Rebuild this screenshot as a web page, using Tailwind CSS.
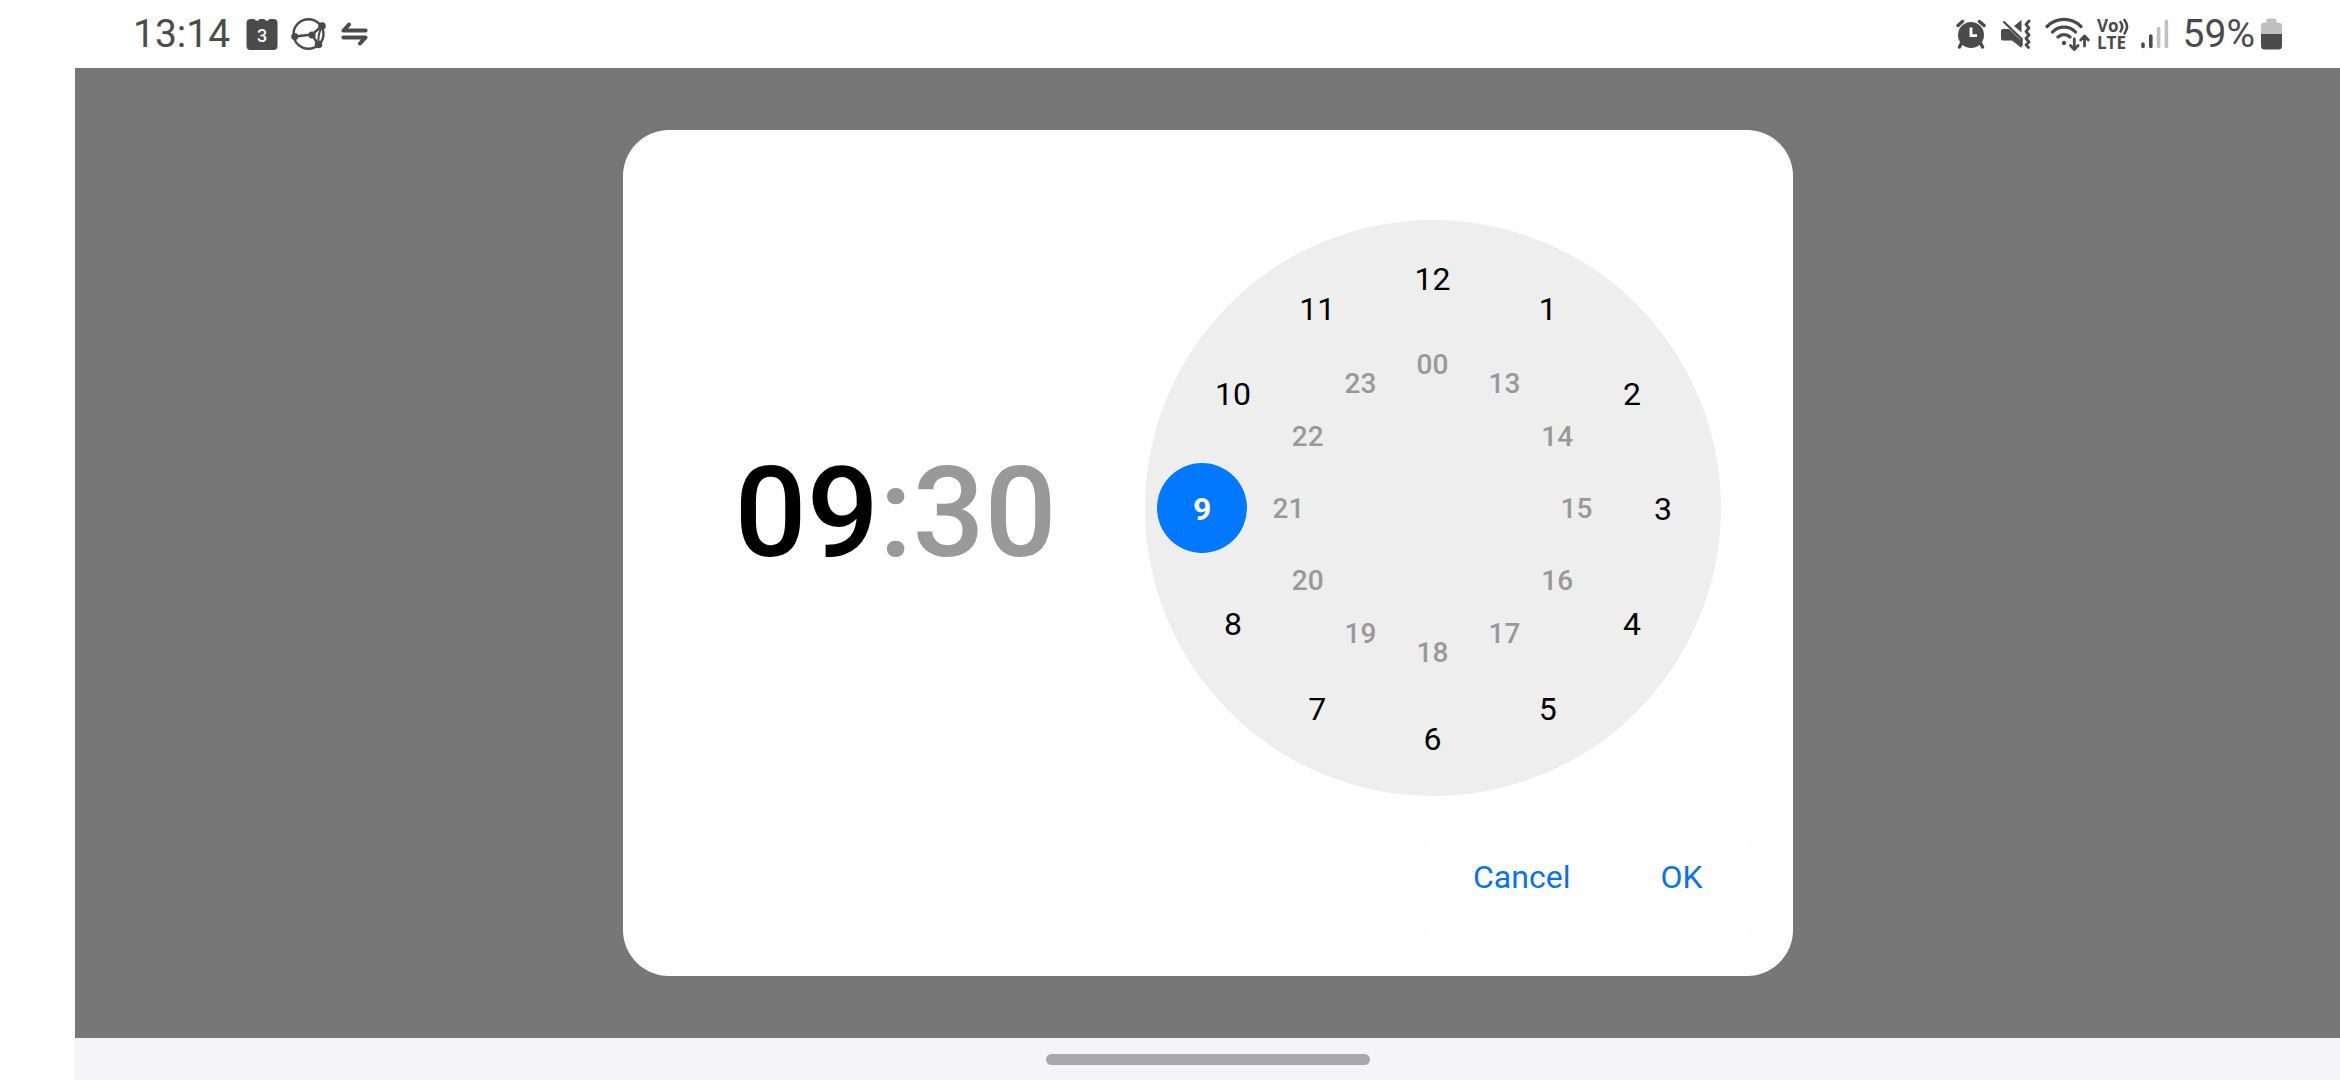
<!DOCTYPE html>
<html lang="en">
<head>
<meta charset="utf-8">
<meta name="viewport" content="width=device-width, initial-scale=1">
<title>Set time</title>
<script src="https://cdn.jsdelivr.net/npm/@tailwindcss/browser@4"></script>
</head>
<body class="flex min-h-screen flex-col bg-white font-[Roboto,sans-serif] text-black">

  <header class="flex h-[68px] items-center justify-between pr-[58px] pl-[133px] text-[#4b4b4b]">
    <div class="flex items-center">
      <time class="text-[39px] leading-[68px]">13:14</time>
      <!-- calendar -->
      <svg class="ml-4 h-8 w-8" viewBox="0 0 32 32" fill="currentColor" role="img" aria-label="Calendar, 3">
        <path d="M4 1h4.500a2.800 2.800 0 0 0 5.200 0h4.600a2.800 2.800 0 0 0 5.200 0H27.500a4 4 0 0 1 4 4v23a4 4 0 0 1-4 4H4.500a4 4 0 0 1-4-4V5a4 4 0 0 1 3.500-4z"/>
        <text x="16" y="24" text-anchor="middle" font-size="18" font-weight="500" fill="#fff">3</text>
      </svg>
      <!-- connected devices -->
      <svg class="ml-3 h-9 w-9" viewBox="0 0 36 36" fill="none" stroke="currentColor" role="img" aria-label="Connected devices">
        <ellipse cx="18.500" cy="18" rx="15" ry="14.800" stroke-width="2.400"/>
        <path d="M5 20.500 22 18.500 32 10M22 18.500 28.500 29" stroke-width="2.400"/>
        <path d="M32 11q-5 8-3 17" stroke-width="2"/>
        <g fill="currentColor" stroke="none"><circle cx="4.800" cy="20.500" r="3.600"/><circle cx="22" cy="19" r="3.600"/><circle cx="32" cy="10" r="3.800"/><circle cx="28.500" cy="28.500" r="3.800"/></g>
      </svg>
      <!-- data transfer -->
      <svg class="ml-[15px] h-6 w-[27px]" viewBox="0 0 27 24" fill="none" stroke="currentColor" stroke-width="4" stroke-linecap="round" stroke-linejoin="round" role="img" aria-label="Data transfer">
        <path d="M8 2.500 2.500 8.600H24.600"/>
        <path d="M19 21.500 24.500 15.400H2.400"/>
      </svg>
    </div>

    <div class="flex items-center">
      <!-- alarm -->
      <svg class="h-[30px] w-[30px]" viewBox="0 0 30 30" fill="currentColor" role="img" aria-label="Alarm set">
        <circle cx="15" cy="16" r="13"/>
        <path d="M2 6.500 6.500 2.500M28 6.500 23.500 2.500M5.500 24 3.500 28M24.500 24 26.500 28" stroke="currentColor" stroke-width="3.400" stroke-linecap="round" fill="none"/>
        <path d="M15 8.500V16.700H21" fill="none" stroke="#fff" stroke-width="2.800"/>
      </svg>
      <!-- vibrate, sound off -->
      <svg class="ml-[15px] h-[30px] w-[30px]" viewBox="0 0 30 30" fill="currentColor" role="img" aria-label="Vibrate">
        <path d="M2 10H8L20.500 22V29L11 21.500H2a2 2 0 0 1-2-2V12a2 2 0 0 1 2-2z"/>
        <path d="M20.500 1V13.500L13 7z"/>
        <path d="M2.500 2.500 20.500 20V27" fill="none" stroke="currentColor" stroke-width="2.400"/>
        <path d="M28 2 25 5.500l3 3.500-3 3.500 3 3.500-3 3.500 3 3.500-3 3 2.500 2.500" fill="none" stroke="currentColor" stroke-width="2.800" stroke-linecap="round" stroke-linejoin="round"/>
      </svg>
      <!-- wifi with traffic arrows -->
      <svg class="ml-[14px] h-[34px] w-[45px]" viewBox="0 0 45 34" fill="none" stroke="currentColor" stroke-width="3.200" stroke-linecap="round" stroke-linejoin="round" role="img" aria-label="Wi-Fi">
        <path d="M2 9.500a24 24 0 0 1 34 0M7.500 15a16 16 0 0 1 23 0M13 20a8.600 8.600 0 0 1 12 0"/>
        <circle cx="19" cy="26" r="2.200" fill="currentColor" stroke="none"/>
        <path d="M29.300 22v10M25.500 28.500l3.800 4 3.800-4M39.500 29V19.500M35.700 23l3.800-4 3.800 4" stroke-width="2.800"/>
      </svg>
      <!-- voice over LTE -->
      <svg class="ml-[7px] h-[34px] w-8 overflow-visible" viewBox="0 0 32 34" fill="currentColor" role="img" aria-label="VoLTE">
        <g font-family="Open Sans, sans-serif" font-weight="700">
          <text x="0" y="15" font-size="17">Vo</text>
          <text x="0" y="32" font-size="17">LTE</text>
        </g>
        <path d="M23.500 5q3.400 4.500 0 9.500M27.500 3q5 6.500 0 13.500" fill="none" stroke="currentColor" stroke-width="2.600" stroke-linecap="round"/>
      </svg>
      <!-- signal strength -->
      <svg class="ml-3 h-[30px] w-7" viewBox="0 0 28 30" stroke-width="3.600" stroke-linecap="round" role="img" aria-label="Signal 2 of 4">
        <path d="M2 25v2.500M9.800 17V27.500" stroke="currentColor"/>
        <path d="M17.600 9.500V27.500M25.400 2.500V27.500" stroke="#c0c0c0"/>
      </svg>
      <span class="ml-[14px] text-[39px] leading-[68px]">59%</span>
      <!-- battery -->
      <svg class="ml-[6px] h-8 w-[21px]" viewBox="0 0 21 32" role="img" aria-label="Battery">
        <path d="M0 16V8a3.500 3.500 0 0 1 3.500-3.500H5.500V3a2 2 0 0 1 2-2.500h6a2 2 0 0 1 2 2.500V4.500h2A3.500 3.500 0 0 1 21 8v8z" fill="#c0c0c0"/>
        <path d="M0 16H21V28a3.500 3.500 0 0 1-3.500 3.500h-14A3.500 3.500 0 0 1 0 28z" fill="currentColor"/>
      </svg>
    </div>
  </header>

  <div class="flex grow flex-col pl-[75px]">
    <main class="flex grow items-center justify-center bg-[#777]">
      <section role="dialog" aria-label="Set time" class="w-full max-w-[1170px] rounded-[46px] bg-[#fefefe] pt-[90px] pb-[41px]">
        <div class="flex items-center justify-between pr-[72px] pl-[112px]">
          <div class="flex pt-[10px] text-[127px] leading-[160px] font-medium text-[#999]">
            <button class="text-black" aria-label="Hour">09</button><span>:</span><button aria-label="Minute">30</button>
          </div>

          <!-- 24-hour dial: outer ring 1-12, inner ring 13-00 -->
          <div class="relative size-[576px] shrink-0 rounded-full bg-[#eee] text-[32px] *:absolute *:flex *:size-[90px] *:-translate-1/2 *:items-center *:justify-center *:rounded-full *:pt-[2px]">
            <button class="top-[10%] left-[50%]">12</button>
            <button class="top-[15.36%] left-[70%]">1</button>
            <button class="top-[30%] left-[84.64%]">2</button>
            <button class="top-[50%] left-[90%]">3</button>
            <button class="top-[70%] left-[84.64%]">4</button>
            <button class="top-[84.64%] left-[70%]">5</button>
            <button class="top-[90%] left-[50%]">6</button>
            <button class="top-[84.64%] left-[30%]">7</button>
            <button class="top-[70%] left-[15.36%]">8</button>
            <button class="top-[50%] left-[10%] bg-[#0078ff] font-bold text-white" aria-pressed="true">9</button>
            <button class="top-[30%] left-[15.36%]">10</button>
            <button class="top-[15.36%] left-[30%]">11</button>
            <button class="top-[25%] left-[50%] text-[28px] font-medium text-[#999]">00</button>
            <button class="top-[28.35%] left-[62.5%] text-[28px] font-medium text-[#999]">13</button>
            <button class="top-[37.5%] left-[71.65%] text-[28px] font-medium text-[#999]">14</button>
            <button class="top-[50%] left-[75%] text-[28px] font-medium text-[#999]">15</button>
            <button class="top-[62.5%] left-[71.65%] text-[28px] font-medium text-[#999]">16</button>
            <button class="top-[71.65%] left-[62.5%] text-[28px] font-medium text-[#999]">17</button>
            <button class="top-[75%] left-[50%] text-[28px] font-medium text-[#999]">18</button>
            <button class="top-[71.65%] left-[37.5%] text-[28px] font-medium text-[#999]">19</button>
            <button class="top-[62.5%] left-[28.35%] text-[28px] font-medium text-[#999]">20</button>
            <button class="top-[50%] left-[25%] text-[28px] font-medium text-[#999]">21</button>
            <button class="top-[37.5%] left-[28.35%] text-[28px] font-medium text-[#999]">22</button>
            <button class="top-[28.35%] left-[37.5%] text-[28px] font-medium text-[#999]">23</button>
          </div>
        </div>

        <div class="mt-[45px] mr-[45px] ml-auto flex w-fit bg-white pb-[22px] text-[32px] leading-[72px] text-[#0c72e8]">
          <button class="px-[45px]">Cancel</button>
          <button class="px-[45px]">OK</button>
        </div>
      </section>
    </main>

    <nav class="flex h-[42px] justify-center bg-[#f5f5f8] pt-4">
      <button class="h-[11px] w-[324px] rounded-full bg-[#a9a9a9]" aria-label="Home"></button>
    </nav>
  </div>

</body>
</html>
